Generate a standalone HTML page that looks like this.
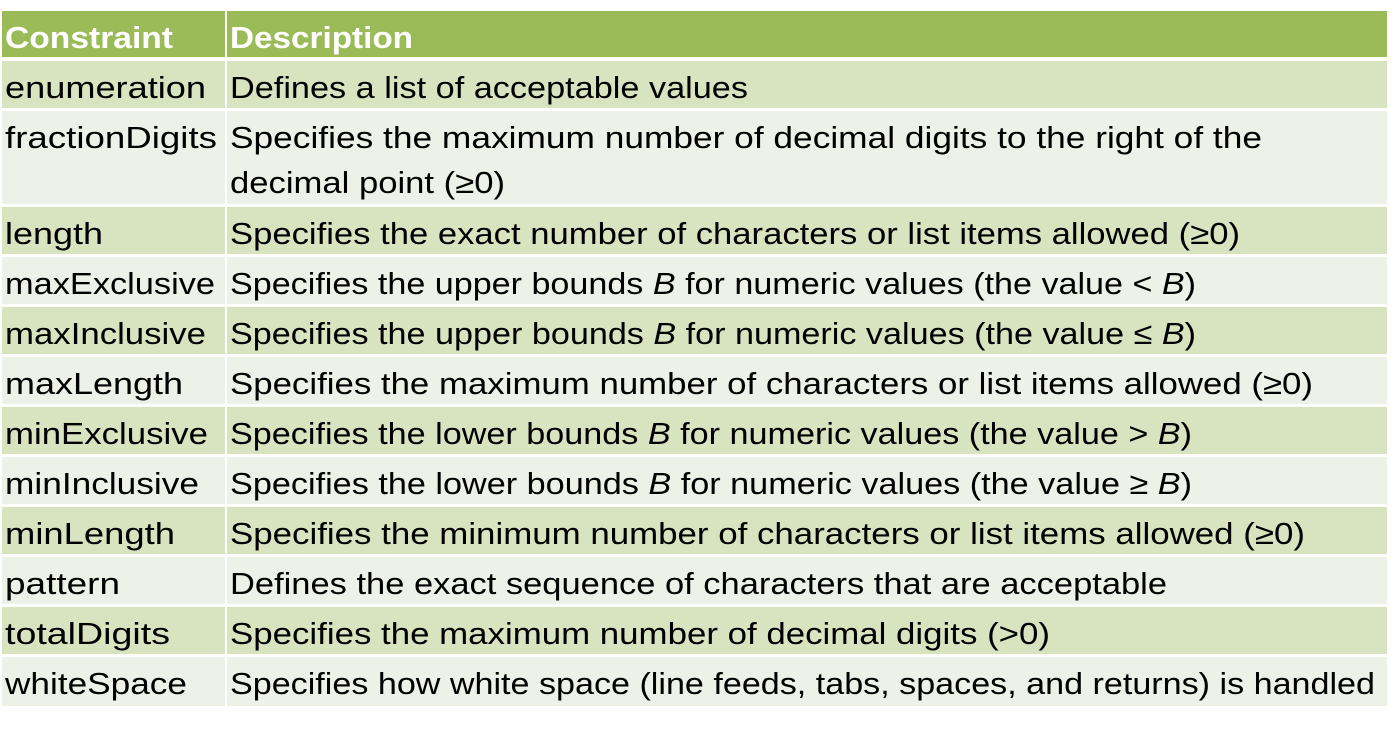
<!DOCTYPE html>
<html><head><meta charset="utf-8"><style>
html,body{margin:0;padding:0;background:#fff;width:1394px;height:730px;overflow:hidden}
svg text{font-family:"Liberation Sans",sans-serif;font-size:31px;fill:#000}
</style></head><body>
<svg width="1394" height="730" xmlns="http://www.w3.org/2000/svg">
<rect x="2" y="11" width="223" height="46" fill="#9bbb59"/>
<rect x="227" y="11" width="1160" height="46" fill="#9bbb59"/>
<rect x="2" y="61" width="223" height="47" fill="#d8e3c0"/><rect x="227" y="61" width="1160" height="47" fill="#d8e3c0"/>
<rect x="2" y="111" width="223" height="93" fill="#eef1e7"/><rect x="227" y="111" width="1160" height="93" fill="#eef1e7"/>
<rect x="2" y="207" width="223" height="47" fill="#d8e3c0"/><rect x="227" y="207" width="1160" height="47" fill="#d8e3c0"/>
<rect x="2" y="257" width="223" height="47" fill="#eef1e7"/><rect x="227" y="257" width="1160" height="47" fill="#eef1e7"/>
<rect x="2" y="307" width="223" height="47" fill="#d8e3c0"/><rect x="227" y="307" width="1160" height="47" fill="#d8e3c0"/>
<rect x="2" y="357" width="223" height="47" fill="#eef1e7"/><rect x="227" y="357" width="1160" height="47" fill="#eef1e7"/>
<rect x="2" y="407" width="223" height="47" fill="#d8e3c0"/><rect x="227" y="407" width="1160" height="47" fill="#d8e3c0"/>
<rect x="2" y="457" width="223" height="47" fill="#eef1e7"/><rect x="227" y="457" width="1160" height="47" fill="#eef1e7"/>
<rect x="2" y="507" width="223" height="47" fill="#d8e3c0"/><rect x="227" y="507" width="1160" height="47" fill="#d8e3c0"/>
<rect x="2" y="557" width="223" height="47" fill="#eef1e7"/><rect x="227" y="557" width="1160" height="47" fill="#eef1e7"/>
<rect x="2" y="607" width="223" height="47" fill="#d8e3c0"/><rect x="227" y="607" width="1160" height="47" fill="#d8e3c0"/>
<rect x="2" y="657" width="223" height="49" fill="#eef1e7"/><rect x="227" y="657" width="1160" height="49" fill="#eef1e7"/>

<text x="5" y="48" style="font-weight:bold;fill:#fff" textLength="168" lengthAdjust="spacingAndGlyphs">Constraint</text>
<text x="230" y="48" style="font-weight:bold;fill:#fff" textLength="183" lengthAdjust="spacingAndGlyphs">Description</text>

<text x="5" y="98" textLength="201" lengthAdjust="spacingAndGlyphs">enumeration</text>
<text x="230" y="98" textLength="518" lengthAdjust="spacingAndGlyphs">Defines a list of acceptable values</text>

<text x="5" y="148" textLength="212" lengthAdjust="spacingAndGlyphs">fractionDigits</text>
<text x="230" y="148" textLength="1032" lengthAdjust="spacingAndGlyphs">Specifies the maximum number of decimal digits to the right of the</text>
<text x="230" y="193" textLength="275" lengthAdjust="spacingAndGlyphs">decimal point (≥0)</text>

<text x="5" y="244" textLength="98" lengthAdjust="spacingAndGlyphs">length</text>
<text x="230" y="244" textLength="1010" lengthAdjust="spacingAndGlyphs">Specifies the exact number of characters or list items allowed (≥0)</text>

<text x="5" y="294" textLength="210" lengthAdjust="spacingAndGlyphs">maxExclusive</text>
<text x="230" y="294" textLength="966" lengthAdjust="spacingAndGlyphs">Specifies the upper bounds <tspan font-style="italic">B</tspan> for numeric values (the value &lt; <tspan font-style="italic">B</tspan>)</text>

<text x="5" y="344" textLength="201" lengthAdjust="spacingAndGlyphs">maxInclusive</text>
<text x="230" y="344" textLength="966" lengthAdjust="spacingAndGlyphs">Specifies the upper bounds <tspan font-style="italic">B</tspan> for numeric values (the value ≤ <tspan font-style="italic">B</tspan>)</text>

<text x="5" y="394" textLength="178" lengthAdjust="spacingAndGlyphs">maxLength</text>
<text x="230" y="394" textLength="1083" lengthAdjust="spacingAndGlyphs">Specifies the maximum number of characters or list items allowed (≥0)</text>

<text x="5" y="444" textLength="203" lengthAdjust="spacingAndGlyphs">minExclusive</text>
<text x="230" y="444" textLength="962" lengthAdjust="spacingAndGlyphs">Specifies the lower bounds <tspan font-style="italic">B</tspan> for numeric values (the value &gt; <tspan font-style="italic">B</tspan>)</text>

<text x="5" y="494" textLength="194" lengthAdjust="spacingAndGlyphs">minInclusive</text>
<text x="230" y="494" textLength="962" lengthAdjust="spacingAndGlyphs">Specifies the lower bounds <tspan font-style="italic">B</tspan> for numeric values (the value ≥ <tspan font-style="italic">B</tspan>)</text>

<text x="5" y="544" textLength="170" lengthAdjust="spacingAndGlyphs">minLength</text>
<text x="230" y="544" textLength="1075" lengthAdjust="spacingAndGlyphs">Specifies the minimum number of characters or list items allowed (≥0)</text>

<text x="5" y="594" textLength="115" lengthAdjust="spacingAndGlyphs">pattern</text>
<text x="230" y="594" textLength="937" lengthAdjust="spacingAndGlyphs">Defines the exact sequence of characters that are acceptable</text>

<text x="5" y="644" textLength="165" lengthAdjust="spacingAndGlyphs">totalDigits</text>
<text x="230" y="644" textLength="820" lengthAdjust="spacingAndGlyphs">Specifies the maximum number of decimal digits (&gt;0)</text>

<text x="5" y="694" textLength="182" lengthAdjust="spacingAndGlyphs">whiteSpace</text>
<text x="230" y="694" textLength="1145" lengthAdjust="spacingAndGlyphs">Specifies how white space (line feeds, tabs, spaces, and returns) is handled</text>
</svg>
</body></html>
